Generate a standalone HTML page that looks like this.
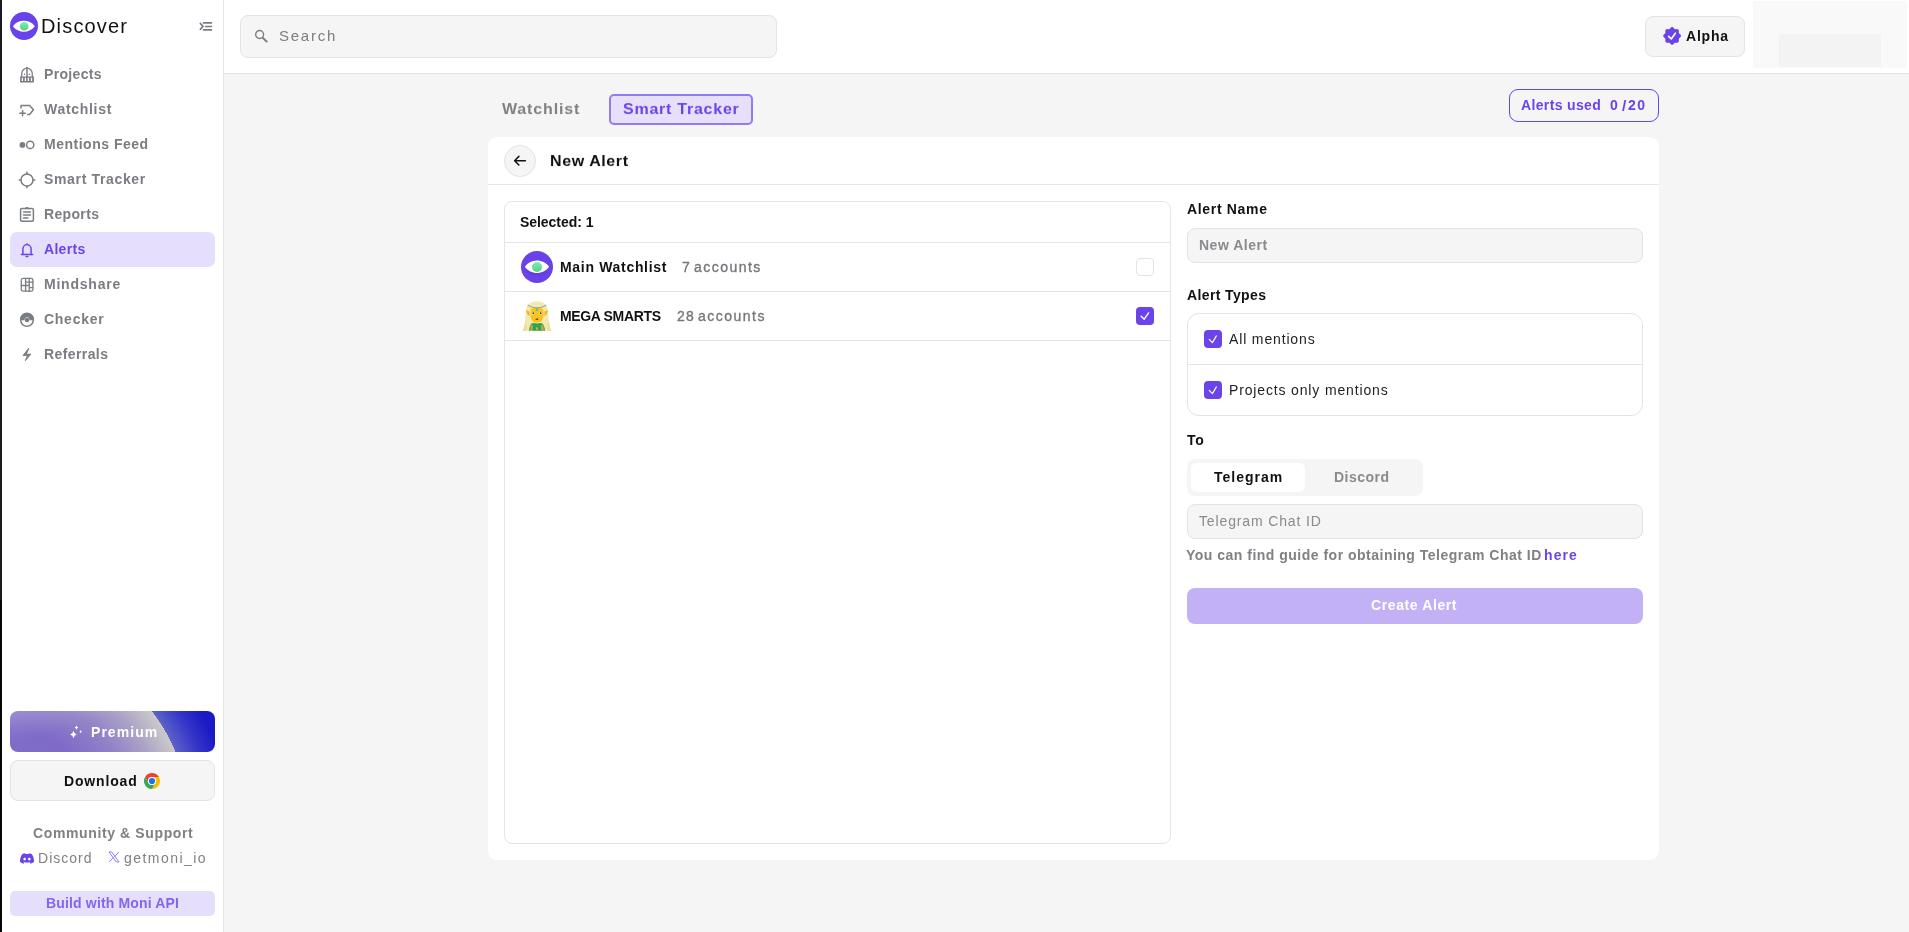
<!DOCTYPE html><html><head><meta charset="utf-8"><style>
*{margin:0;padding:0;box-sizing:border-box}
html,body{width:1909px;height:932px;overflow:hidden;background:#f5f5f5;font-family:"Liberation Sans",sans-serif}
.t{position:absolute;line-height:1;white-space:pre;will-change:transform}
.r{position:absolute}
svg{position:absolute;overflow:visible}
</style></head><body>
<div class="r" style="left:0px;top:0px;width:224px;height:932px;background:#fff;border-right:1px solid #e5e5e5"></div>
<div class="r" style="left:0px;top:0px;width:2px;height:600px;background:#1c1c1e"></div>
<div class="r" style="left:0px;top:600px;width:2px;height:332px;background:#060606"></div>
<div class="r" style="left:224px;top:0px;width:1685px;height:74px;background:#fff;border-bottom:1px solid #e5e5e5"></div>
<svg style="left:10px;top:12px" width="28" height="28" viewBox="0 0 28 28">
<defs><linearGradient id="gg" x1="0" y1="0" x2="0" y2="1"><stop offset="0" stop-color="#80ecb2"/><stop offset="1" stop-color="#58cf8a"/></linearGradient></defs>
<circle cx="14" cy="14" r="14" fill="#6a42e9"/>
<path d="M2.9 14.2 C8 6.9 19.7 6.9 24.8 14.2 C19.7 21.5 8 21.5 2.9 14.2Z" fill="#fff"/>
<circle cx="14.2" cy="14.2" r="4.3" fill="url(#gg)"/>
</svg>
<div class="t" style="left:41.14px;top:15.86px;font-size:20px;font-weight:normal;color:#111;letter-spacing:1.171px;">Discover</div>
<svg style="left:194px;top:15px" width="22" height="22" viewBox="0 0 22 22" fill="none" stroke="#7a7d83" stroke-width="1.6" stroke-linecap="round" stroke-linejoin="round">
<path d="M6.3 8.4 L9 11.4 L6.3 14.4"/><path d="M9.5 7.9H17.5M11.5 11.45H17.5M9.5 14.9H17.5"/>
</svg>
<div class="r" style="left:10px;top:232px;width:205px;height:35px;background:#e5defc;border-radius:7px"></div>
<div class="t" style="left:43.58px;top:66.94px;font-size:14px;font-weight:bold;color:#7c7c82;letter-spacing:0.330px;">Projects</div>
<div class="t" style="left:44.24px;top:101.94px;font-size:14px;font-weight:bold;color:#7c7c82;letter-spacing:0.700px;">Watchlist</div>
<div class="t" style="left:43.58px;top:136.94px;font-size:14px;font-weight:bold;color:#7c7c82;letter-spacing:0.507px;">Mentions Feed</div>
<div class="t" style="left:44.29px;top:171.94px;font-size:14px;font-weight:bold;color:#7c7c82;letter-spacing:0.652px;">Smart Tracker</div>
<div class="t" style="left:43.58px;top:206.94px;font-size:14px;font-weight:bold;color:#7c7c82;letter-spacing:0.337px;">Reports</div>
<div class="t" style="left:44.02px;top:241.94px;font-size:14px;font-weight:bold;color:#6a44e8;letter-spacing:0.297px;">Alerts</div>
<div class="t" style="left:43.58px;top:276.94px;font-size:14px;font-weight:bold;color:#7c7c82;letter-spacing:0.781px;">Mindshare</div>
<div class="t" style="left:44.32px;top:311.94px;font-size:14px;font-weight:bold;color:#7c7c82;letter-spacing:0.728px;">Checker</div>
<div class="t" style="left:43.58px;top:346.94px;font-size:14px;font-weight:bold;color:#7c7c82;letter-spacing:0.405px;">Referrals</div>
<svg style="left:16px;top:64px" width="22" height="22" viewBox="0 0 22 22" fill="none" stroke="#7a7d83" stroke-width="1.3" stroke-linecap="round" stroke-linejoin="round"><path d="M5.75 12.8 V9.4 A5.25 5.25 0 0 1 16.25 9.4 V12.8"/><path d="M11 3.4 V12.8" stroke-width="1.5"/><circle cx="8.6" cy="10.3" r="0.75" fill="#7a7d83" stroke="none"/><circle cx="13.4" cy="10.3" r="0.75" fill="#7a7d83" stroke="none"/><path fill="#7a7d83" stroke="none" fill-rule="evenodd" d="M4.1 12.5 H17.9 V18.4 H4.1Z M5.75 13.8 V17.1 H7.05 V13.8Z M8.75 13.8 V17.1 H10.05 V13.8Z M11.75 13.8 V17.1 H13.05 V13.8Z M14.85 13.8 V17.1 H16.15 V13.8Z"/></svg>
<svg style="left:16px;top:99px" width="22" height="22" viewBox="0 0 22 22" fill="none" stroke="#7a7d83" stroke-width="1.5" stroke-linecap="round" stroke-linejoin="round"><path d="M5 9 V6.6 H13.6 L17.4 10.8 L13.6 15.4 H11.6"/><path d="M3.8 14.2H9.4M6.6 11.4V16.8"/></svg>
<svg style="left:16px;top:134px" width="22" height="22" viewBox="0 0 22 22" fill="none" stroke="#7a7d83" stroke-width="1.5" stroke-linecap="round" stroke-linejoin="round"><circle cx="6.4" cy="10.9" r="2.1" fill="#7a7d83"/><circle cx="14.2" cy="10.9" r="3.6"/></svg>
<svg style="left:16px;top:169px" width="22" height="22" viewBox="0 0 22 22" fill="none" stroke="#7a7d83" stroke-width="1.5" stroke-linecap="round" stroke-linejoin="round"><circle cx="11" cy="11" r="6"/><path d="M11 3.2V5M11 17V18.8M3.2 11H5M17 11H18.8"/></svg>
<svg style="left:16px;top:204px" width="22" height="22" viewBox="0 0 22 22" fill="none" stroke="#7a7d83" stroke-width="1.5" stroke-linecap="round" stroke-linejoin="round"><rect x="4.6" y="4.6" width="12.8" height="12.6" rx="1.2"/><path d="M9.6 4.6 A1.5 1.5 0 0 1 12.4 4.6"/><path d="M7.6 7.9H14.4M7.6 10.9H14.4M7.6 13.9H12"/></svg>
<svg style="left:16px;top:239px" width="22" height="22" viewBox="0 0 22 22" fill="none" stroke="#6a44e8" stroke-width="1.5" stroke-linecap="round" stroke-linejoin="round">
<path d="M6.9 15.5 V10.2 A4.1 4.6 0 0 1 15.1 10.2 V15.5"/><path d="M5.4 15.5H16.6"/><path d="M11 4.9V5.6"/><path d="M10.2 17.6H11.8"/></svg>
<svg style="left:16px;top:274px" width="22" height="22" viewBox="0 0 22 22" fill="none" stroke="#7a7d83" stroke-width="1.5" stroke-linecap="round" stroke-linejoin="round"><g stroke-width="1.3"><rect x="5.3" y="4.4" width="11.6" height="12.8" rx="1.8"/><path d="M9.6 4.4V17.2M13.2 4.4V17.2M5.3 11.5H13.2M9.6 8.2H16.9M13.2 13.6H16.9"/></g></svg>
<svg style="left:16px;top:309px" width="22" height="22" viewBox="0 0 22 22" fill="none" stroke="#7a7d83" stroke-width="1.5" stroke-linecap="round" stroke-linejoin="round"><circle cx="11" cy="11" r="6.3"/><path d="M4.7 10.6 A6.3 6.3 0 0 1 17.3 10.6 H14.2 A3.2 3.2 0 0 0 7.8 10.6Z" fill="#7a7d83"/><circle cx="11" cy="11" r="1.6" fill="#7a7d83"/></svg>
<svg style="left:16px;top:344px" width="22" height="22" viewBox="0 0 22 22" fill="none" stroke="#7a7d83" stroke-width="1.5" stroke-linecap="round" stroke-linejoin="round"><path d="M12.6 4.4 L7.1 11.4 H11.6 L9.4 16.6 L14.8 10.2 H10.6Z" fill="#7a7d83" stroke-width="1"/></svg>
<div class="r" style="left:10px;top:711px;width:205px;height:41px;border-radius:8px;overflow:hidden;background:linear-gradient(165deg, rgba(255,255,255,0.16) 0%, rgba(255,255,255,0) 35%), radial-gradient(circle 180px at 0px 110px, #8070c8 0%, #7f6ac8 50%, #9283c8 70%, #aca2c6 85%, #c2bec8 95%, #c9c9c9 99.6%, #5c62c8 99.7%, #3434c8 112%, #1a1ac6 122%, #1616c4 140%)"></div>
<svg style="left:60px;top:716px" width="40" height="30" viewBox="0 0 40 30" fill="#fff">
<path d="M13.5 14.8 Q14.2 18 16.6 18.5 Q14.2 19 13.5 22.2 Q12.8 19 10.2 18.5 Q12.8 18 13.5 14.8Z"/>
<path d="M16.5 9.2 Q17 11 18.4 11.5 Q17 12 16.5 13.8 Q16 12 14.6 11.5 Q16 11 16.5 9.2Z"/>
<ellipse cx="20.6" cy="15.7" rx="0.9" ry="1.1"/>
</svg>
<div class="t" style="left:91.48px;top:724.94px;font-size:14px;font-weight:bold;color:#fff;letter-spacing:1.043px;">Premium</div>
<div class="r" style="left:10px;top:760px;width:205px;height:41px;background:#f5f5f5;border:1px solid #e3e3e3;border-radius:8px"></div>
<div class="t" style="left:63.78px;top:773.94px;font-size:14px;font-weight:bold;color:#111;letter-spacing:0.846px;">Download</div>
<svg style="left:144px;top:773px" width="16" height="16" viewBox="0 0 16 16"><path fill="#ea4335" d="M1.07 4.00 A8 8 0 0 1 14.93 4.00 L8.00 4.00 A4 4 0 0 0 4.54 10.00 Z"/><path fill="#fbbc04" d="M14.93 4.00 A8 8 0 0 1 8.00 16.00 L11.46 10.00 A4 4 0 0 0 8.00 4.00 Z"/><path fill="#34a853" d="M8.00 16.00 A8 8 0 0 1 1.07 4.00 L4.54 10.00 A4 4 0 0 0 11.46 10.00 Z"/><circle cx="8" cy="8" r="4" fill="#fff"/><circle cx="8" cy="8" r="3.1" fill="#1a73e8"/></svg>
<div class="t" style="left:32.52px;top:825.94px;font-size:14px;font-weight:bold;color:#808085;letter-spacing:0.621px;">Community &amp; Support</div>
<svg style="left:19.5px;top:853px" width="14" height="11" viewBox="0 0 24 18"><path fill="#6a44e8" d="M20.3 1.5A19.8 19.8 0 0 0 15.4 0l-.6 1.3a18.4 18.4 0 0 0-5.6 0L8.6 0A19.7 19.7 0 0 0 3.7 1.5C.6 6.1-.3 10.6.1 15a19.9 19.9 0 0 0 6 3l1.3-2.1a13 13 0 0 1-2-1l.5-.4a14.2 14.2 0 0 0 12.2 0l.5.4a13 13 0 0 1-2 1l1.3 2.1a19.8 19.8 0 0 0 6-3c.5-5.2-.8-9.6-3.6-13.5zM8 12.3c-1.2 0-2.2-1.1-2.2-2.4S6.8 7.5 8 7.5s2.2 1.1 2.2 2.4-1 2.4-2.2 2.4zm8 0c-1.2 0-2.2-1.100-2.2-2.4s1-2.4 2.2-2.4 2.2 1.1 2.2 2.4-1 2.4-2.2 2.4z"/></svg>
<div class="t" style="left:38.24px;top:850.94px;font-size:14px;font-weight:normal;color:#808085;letter-spacing:1.015px;">Discord</div>
<svg style="left:107.5px;top:851px" width="12" height="12" viewBox="0 0 24 24"><path fill="none" stroke="#7a5af0" stroke-width="1.6" d="M2 2h5.5l14.5 20h-5.5z"/><path stroke="#7a5af0" stroke-width="1.6" d="M21.5 2l-8 9M2.5 22l8-9"/></svg>
<div class="t" style="left:123.64px;top:850.94px;font-size:14px;font-weight:normal;color:#808085;letter-spacing:1.460px;">getmoni_io</div>
<div class="r" style="left:10px;top:891px;width:205px;height:25px;background:#e5dffc;border-radius:5px"></div>
<div class="t" style="left:45.68px;top:895.94px;font-size:14px;font-weight:bold;color:#8466ee;letter-spacing:0.158px;">Build with Moni API</div>
<div class="r" style="left:240px;top:15px;width:537px;height:43px;background:#f5f5f5;border:1px solid #e3e3e3;border-radius:8px"></div>
<svg style="left:254px;top:29px" width="16" height="16" viewBox="0 0 16 16" fill="none" stroke="#7a7d83" stroke-width="1.4"><circle cx="5.6" cy="5.5" r="3.95"/><path d="M8.5 8.5L13.2 13.1" stroke-width="1.9"/></svg>
<div class="t" style="left:278.59px;top:28.00px;font-size:15px;font-weight:normal;color:#7c7c82;letter-spacing:1.761px;">Search</div>
<div class="r" style="left:1645px;top:16px;width:100px;height:41px;background:#f5f5f5;border:1px solid #e3e3e3;border-radius:8px"></div>
<svg style="left:1660px;top:24px" width="24" height="24" viewBox="0 0 24 24"><path fill="#6a44e8" d="M21.00 11.90 L20.88 12.48 L20.55 13.01 L20.09 13.49 L19.61 13.91 L19.20 14.31 L18.94 14.73 L18.83 15.22 L18.83 15.79 L18.88 16.43 L18.86 17.09 L18.72 17.70 L18.39 18.19 L17.90 18.52 L17.29 18.66 L16.63 18.68 L15.99 18.63 L15.42 18.63 L14.93 18.74 L14.51 19.00 L14.11 19.41 L13.69 19.89 L13.21 20.35 L12.68 20.68 L12.10 20.80 L11.52 20.68 L10.99 20.35 L10.51 19.89 L10.09 19.41 L9.69 19.00 L9.27 18.74 L8.78 18.63 L8.21 18.63 L7.57 18.68 L6.91 18.66 L6.30 18.52 L5.81 18.19 L5.48 17.70 L5.34 17.09 L5.32 16.43 L5.37 15.79 L5.37 15.22 L5.26 14.73 L5.00 14.31 L4.59 13.91 L4.11 13.49 L3.65 13.01 L3.32 12.48 L3.20 11.90 L3.32 11.32 L3.65 10.79 L4.11 10.31 L4.59 9.89 L5.00 9.49 L5.26 9.07 L5.37 8.58 L5.37 8.01 L5.32 7.37 L5.34 6.71 L5.48 6.10 L5.81 5.61 L6.30 5.28 L6.91 5.14 L7.57 5.12 L8.21 5.17 L8.78 5.17 L9.27 5.06 L9.69 4.80 L10.09 4.39 L10.51 3.91 L10.99 3.45 L11.52 3.12 L12.10 3.00 L12.68 3.12 L13.21 3.45 L13.69 3.91 L14.11 4.39 L14.51 4.80 L14.93 5.06 L15.42 5.17 L15.99 5.17 L16.63 5.12 L17.29 5.14 L17.90 5.28 L18.39 5.61 L18.72 6.10 L18.86 6.71 L18.88 7.37 L18.83 8.01 L18.83 8.58 L18.94 9.07 L19.20 9.49 L19.61 9.89 L20.09 10.31 L20.55 10.79 L20.88 11.32Z"/><path d="M8.7 12.4L11.3 15L15.3 9.2" fill="none" stroke="#fff" stroke-width="1.6" stroke-linecap="round" stroke-linejoin="round"/></svg>
<div class="t" style="left:1685.82px;top:28.94px;font-size:14px;font-weight:bold;color:#111;letter-spacing:0.789px;">Alpha</div>
<div class="r" style="left:1753px;top:1px;width:154px;height:67px;background:#f9f9f9"></div>
<div class="r" style="left:1779px;top:34px;width:102px;height:33px;background:#f3f3f3"></div>
<div class="t" style="left:502.03px;top:101.00px;font-size:16px;font-weight:bold;color:#808085;letter-spacing:0.856px;transform:scaleY(0.9167);transform-origin:0 13.55px">Watchlist</div>
<div class="r" style="left:609px;top:94px;width:144px;height:31px;background:#e6e0fc;border:2px solid #9379f3;border-radius:5px"></div>
<div class="t" style="left:623.09px;top:101.10px;font-size:16px;font-weight:bold;color:#6a44e8;letter-spacing:0.755px;transform:scaleY(0.9167);transform-origin:0 13.55px">Smart Tracker</div>
<div class="r" style="left:1509px;top:89px;width:150px;height:33px;border:1.5px solid #6a44e8;border-radius:9px"></div>
<div class="t" style="left:1521.12px;top:97.84px;font-size:14px;font-weight:bold;color:#6a44e8;letter-spacing:0.353px;">Alerts used</div>
<div class="t" style="left:1609.52px;top:97.84px;font-size:14px;font-weight:bold;color:#6a44e8;letter-spacing:0.000px;">0</div>
<div class="t" style="left:1621.81px;top:97.77px;font-size:15.5px;font-weight:bold;color:#6a44e8;letter-spacing:0.000px;">/</div>
<div class="t" style="left:1628.34px;top:97.84px;font-size:14px;font-weight:bold;color:#6a44e8;letter-spacing:1.449px;">20</div>
<div class="r" style="left:488px;top:137px;width:1171px;height:723px;background:#fff;border-radius:9px"></div>
<div class="r" style="left:488px;top:184px;width:1171px;height:1px;background:#e5e5e5"></div>
<div class="r" style="left:504px;top:145px;width:32px;height:32px;background:#f5f5f5;border:1px solid #e3e3e3;border-radius:50%"></div>
<svg style="left:500px;top:141px" width="40" height="40" viewBox="0 0 40 40" fill="none" stroke="#111" stroke-width="1.5" stroke-linecap="round" stroke-linejoin="round"><path d="M25.4 19.7H14.8M18.9 15.4L14.6 19.7L18.9 24"/></svg>
<div class="t" style="left:550.44px;top:153.00px;font-size:16px;font-weight:bold;color:#111;letter-spacing:0.595px;transform:scaleY(0.9167);transform-origin:0 13.55px">New Alert</div>
<div class="r" style="left:504px;top:201px;width:667px;height:643px;border:1px solid #e5e5e5;border-radius:8px"></div>
<div class="r" style="left:504px;top:242px;width:667px;height:1px;background:#e5e5e5"></div>
<div class="r" style="left:504px;top:291px;width:667px;height:1px;background:#e5e5e5"></div>
<div class="r" style="left:504px;top:340px;width:667px;height:1px;background:#e5e5e5"></div>
<div class="t" style="left:519.99px;top:214.94px;font-size:14px;font-weight:bold;color:#111;letter-spacing:-0.047px;">Selected: 1</div>
<svg style="left:521px;top:251px" width="32" height="32" viewBox="0 0 32 32">
<circle cx="16" cy="16" r="16" fill="#6a42e9"/>
<ellipse cx="16" cy="20.5" rx="11" ry="4.5" fill="#5a34d0" opacity="0.3"/>
<path d="M3.8 15.8 C9.7 7.5 22.2 7.5 28.1 15.8 C22.2 24.1 9.7 24.1 3.8 15.8Z" fill="#fff"/>
<circle cx="16" cy="16" r="5" fill="url(#gg)"/>
</svg>
<div class="t" style="left:559.78px;top:259.94px;font-size:14px;font-weight:bold;color:#111;letter-spacing:0.686px;">Main Watchlist</div>
<div class="t" style="left:682.25px;top:259.94px;font-size:14px;font-weight:normal;color:#76767c;letter-spacing:0.000px;-webkit-text-stroke:0.35px #76767c">7</div>
<div class="t" style="left:694.31px;top:259.94px;font-size:14px;font-weight:normal;color:#76767c;letter-spacing:1.476px;-webkit-text-stroke:0.35px #76767c">accounts</div>
<svg style="left:516px;top:296px" width="42" height="40" viewBox="0 0 42 40">
<path d="M11.5 9 Q21 1.5 30.5 9 Q32.5 14 32.8 24 Q33.5 31 35.3 34.8 L6.5 34.8 Q8.5 31 9.2 24 Q9.5 14 11.5 9Z" fill="#f2e9ac"/>
<path d="M9 26 Q8.5 32 6.5 34.8 L11 34.8 Q10.5 30 10 26Z" fill="#e9d88a" opacity="0.7"/>
<path d="M33 26 Q33.5 32 35.5 34.8 L31 34.8 Q31.5 30 32 26Z" fill="#e9d88a" opacity="0.7"/>
<path d="M10 14 L13.5 15.5 L13.5 20 Q11 19.5 10 14Z" fill="#f4b619"/>
<path d="M32 14 L28.5 15.5 L28.5 20 Q31 19.5 32 14Z" fill="#f4b619"/>
<path d="M14.8 12 Q21 8.5 27.2 12 L27.4 20 Q27 26.5 21 26.8 Q15 26.5 14.6 20Z" fill="#fbc21c"/>
<path d="M15 11 Q21 8 27 11 L27 13 Q21 10.5 15 13Z" fill="#f2e9ac"/>
<path d="M11.8 9.2 Q21 14.5 30.2 9.2" stroke="#a8a89c" stroke-width="1.2" fill="none"/>
<rect x="20" y="11.8" width="2" height="3.4" rx="0.8" fill="#5fc4a8"/>
<ellipse cx="17.2" cy="17.3" rx="1.4" ry="1.2" fill="#fff"/><ellipse cx="24.8" cy="17.3" rx="1.4" ry="1.2" fill="#fff"/>
<circle cx="17.3" cy="17.2" r="0.9" fill="#3a2a10"/><circle cx="24.7" cy="17.2" r="0.9" fill="#3a2a10"/>
<ellipse cx="21" cy="23.2" rx="1.6" ry="0.8" fill="#6a4010"/>
<path d="M13 34.8 Q13.5 28 17 27 L21 27.5 L25 27 Q28.5 28 29 34.8Z" fill="#2aa35c"/>
<path d="M14.5 30 L17 28.5 L16.5 34.8 L14.2 34.8Z" fill="#f0b020" opacity="0.8"/>
<path d="M27.5 30 L25 28.5 L25.5 34.8 L27.8 34.8Z" fill="#f0b020" opacity="0.8"/>
<path d="M19.5 31.5 L22.5 31.5 L21 34.8Z" fill="#f0b020"/>
</svg>
<div class="t" style="left:559.78px;top:308.94px;font-size:14px;font-weight:bold;color:#111;letter-spacing:-0.350px;">MEGA SMARTS</div>
<div class="t" style="left:676.96px;top:308.94px;font-size:14px;font-weight:normal;color:#76767c;letter-spacing:1.114px;-webkit-text-stroke:0.35px #76767c">28</div>
<div class="t" style="left:698.11px;top:308.94px;font-size:14px;font-weight:normal;color:#76767c;letter-spacing:1.479px;-webkit-text-stroke:0.35px #76767c">accounts</div>
<div class="r" style="left:1136px;top:258px;width:18px;height:18px;border:1px solid #e3e3e3;border-radius:4px;background:#fff"></div>
<div class="r" style="left:1136px;top:307px;width:18px;height:18px;background:#6a44e8;border-radius:4px"></div>
<svg style="left:1136px;top:307px" width="18" height="18" viewBox="0 0 18 18" fill="none" stroke="#fff" stroke-width="1.4" stroke-linecap="round" stroke-linejoin="round"><path d="M5.2 9.3L8.2 12.2L12.6 5.9"/></svg>
<div class="t" style="left:1186.92px;top:202.14px;font-size:14px;font-weight:bold;color:#111;letter-spacing:0.668px;">Alert Name</div>
<div class="r" style="left:1187px;top:228px;width:456px;height:35px;background:#f5f5f5;border:1px solid #e3e3e3;border-radius:8px"></div>
<div class="t" style="left:1199.38px;top:238.34px;font-size:14px;font-weight:bold;color:#8a8a8f;letter-spacing:0.510px;">New Alert</div>
<div class="t" style="left:1186.92px;top:288.24px;font-size:14px;font-weight:bold;color:#111;letter-spacing:0.376px;">Alert Types</div>
<div class="r" style="left:1187px;top:313px;width:456px;height:103px;border:1px solid #e3e3e3;border-radius:12px"></div>
<div class="r" style="left:1188px;top:364px;width:454px;height:1px;background:#e5e5e5"></div>
<div class="r" style="left:1204px;top:330px;width:18px;height:18px;background:#6a44e8;border-radius:4px"></div>
<svg style="left:1204px;top:330px" width="18" height="18" viewBox="0 0 18 18" fill="none" stroke="#fff" stroke-width="1.15" stroke-linecap="round" stroke-linejoin="round"><path d="M5.2 9.3L8.4 12.6L12.4 5.9"/></svg>
<div class="r" style="left:1204px;top:381px;width:18px;height:18px;background:#6a44e8;border-radius:4px"></div>
<svg style="left:1204px;top:381px" width="18" height="18" viewBox="0 0 18 18" fill="none" stroke="#fff" stroke-width="1.15" stroke-linecap="round" stroke-linejoin="round"><path d="M5.2 9.3L8.4 12.6L12.4 5.9"/></svg>
<div class="t" style="left:1229.49px;top:332.14px;font-size:14px;font-weight:normal;color:#222;letter-spacing:0.854px;">All mentions</div>
<div class="t" style="left:1228.94px;top:382.94px;font-size:14px;font-weight:normal;color:#222;letter-spacing:0.848px;">Projects only mentions</div>
<div class="t" style="left:1187.34px;top:432.94px;font-size:14px;font-weight:bold;color:#111;letter-spacing:0.672px;">To</div>
<div class="r" style="left:1187px;top:459px;width:236px;height:37px;background:#f5f5f5;border-radius:8px"></div>
<div class="r" style="left:1191px;top:463px;width:114px;height:29px;background:#fff;border-radius:6px"></div>
<div class="t" style="left:1213.94px;top:470.24px;font-size:14px;font-weight:bold;color:#111;letter-spacing:1.008px;">Telegram</div>
<div class="t" style="left:1334.38px;top:470.24px;font-size:14px;font-weight:bold;color:#8a8a8f;letter-spacing:0.485px;">Discord</div>
<div class="r" style="left:1187px;top:504px;width:456px;height:35px;background:#f5f5f5;border:1px solid #e3e3e3;border-radius:8px"></div>
<div class="t" style="left:1199.42px;top:514.24px;font-size:14px;font-weight:normal;color:#8a8a8f;letter-spacing:0.864px;">Telegram Chat ID</div>
<div class="t" style="left:1186.42px;top:547.84px;font-size:14px;font-weight:bold;color:#808085;letter-spacing:0.494px;">You can find guide for obtaining Telegram Chat ID</div>
<div class="t" style="left:1544.20px;top:547.84px;font-size:14px;font-weight:bold;color:#6a44e8;letter-spacing:1.086px;">here</div>
<div class="r" style="left:1187px;top:588px;width:456px;height:36px;background:#c2b1f4;border-radius:8px"></div>
<div class="t" style="left:1371.12px;top:597.84px;font-size:14px;font-weight:bold;color:#fff;letter-spacing:0.603px;">Create Alert</div>
</body></html>
